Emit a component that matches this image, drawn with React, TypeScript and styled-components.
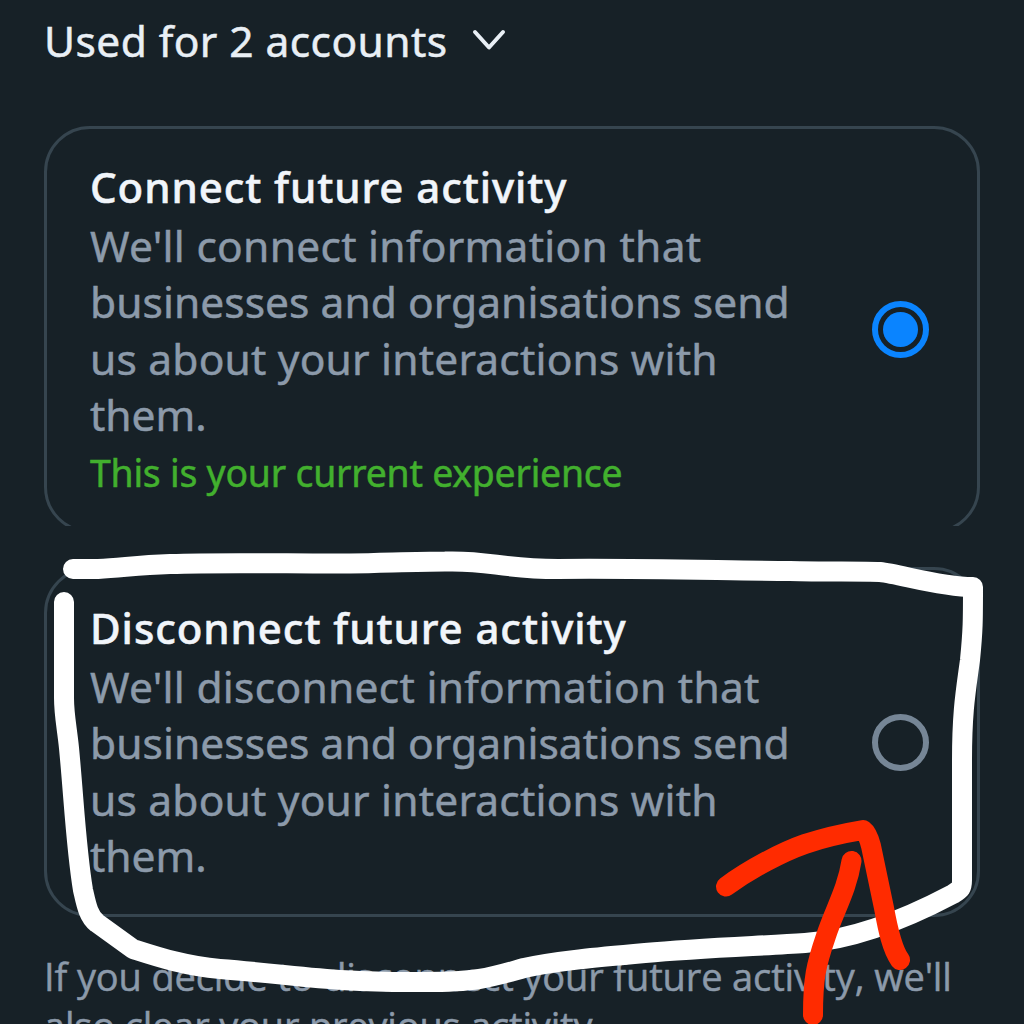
import React from "react";
import styled, { createGlobalStyle } from "styled-components";

const GlobalStyle = createGlobalStyle`
  * { box-sizing: border-box; }
  html, body { margin: 0; background: #172127; }
  body { overflow: hidden; }
`;

const Screen = styled.main`
  position: relative;
  width: 1024px;
  height: 1024px;
  overflow: hidden;
  padding: 11px 44px 0;
  background: #172127;
  color: #e9eff5;
  font-family: "Noto Sans", "Open Sans", sans-serif;
`;

const AccountsToggle = styled.div`
  display: flex;
  align-items: center;
  height: 60px;
  gap: 25px;
`;

const Line = styled.span<{ $track?: number }>`
  display: block;
  white-space: nowrap;
  letter-spacing: ${(p) => p.$track ?? 0}px;
  -webkit-text-stroke: 0.5px currentColor;
`;

const AccountsLabel = styled(Line)`
  font-size: 42.5px;
  line-height: 60px;
`;

const Chevron = styled.svg`
  width: 34px;
  height: 22px;
  margin-top: -2px;
`;

const CardClip = styled.div<{ $height: number }>`
  height: ${(p) => p.$height}px;
  overflow: hidden;
`;

const Options = styled.div`
  display: flex;
  flex-direction: column;
  gap: 41px;
  margin-top: 55px;
`;

const Card = styled.section<{ $height: number }>`
  display: flex;
  align-items: center;
  justify-content: space-between;
  height: ${(p) => p.$height}px;
  padding: 0 48px 0 43px;
  border: 3px solid #36454f;
  border-radius: 46px;
`;

const CardText = styled.div`
  align-self: flex-start;
  padding-top: 26px;
`;

const Title = styled(Line)`
  font-size: 42px;
  font-weight: 500;
  line-height: 63px;
  color: #f1f5fa;
`;

const Description = styled(Line)`
  font-size: 42.5px;
  line-height: 56.3px;
  color: #8c9aaa;
`;

const Status = styled(Line)`
  font-size: 37.4px;
  line-height: 56px;
  margin-top: 2px;
  color: #42b02e;
`;

const Radio = styled.span<{ $checked?: boolean }>`
  display: grid;
  place-items: center;
  width: 57px;
  height: 57px;
  border: 6px solid ${(p) => (p.$checked ? "#0a84ff" : "#768696")};
  border-radius: 50%;

  &::after {
    content: "";
    width: 35px;
    height: 35px;
    border-radius: 50%;
    background: ${(p) => (p.$checked ? "#0a84ff" : "transparent")};
  }
`;

const Note = styled.div`
  margin-top: 35px;
`;

const NoteLine = styled(Line)`
  font-family: "Open Sans", "Noto Sans", sans-serif;
  font-size: 38px;
  line-height: 49px;
  color: #8c9aaa;
`;

const Markup = styled.svg`
  position: absolute;
  inset: 0;
  width: 1024px;
  height: 1024px;
  fill: none;
  stroke-linecap: round;
  stroke-linejoin: round;
`;

export default function App() {
  return (
    <Screen>
      <GlobalStyle />
      <AccountsToggle>
        <AccountsLabel $track={0.42}>Used for 2 accounts</AccountsLabel>
        <Chevron viewBox="0 0 34 22" fill="none">
          <path d="M3 3 17 18.5 31 3" stroke="#e9eff5" strokeWidth="4" strokeLinecap="round" strokeLinejoin="round" />
        </Chevron>
      </AccountsToggle>
      <Options>
        <CardClip $height={400}>
          <Card $height={407}>
            <CardText>
              <Title $track={0.92}>Connect future activity</Title>
              <Description $track={0.28}>We'll connect information that</Description>
              <Description $track={0.05}>businesses and organisations send</Description>
              <Description $track={0.2}>us about your interactions with</Description>
              <Description>them.</Description>
              <Status $track={-0.23}>This is your current experience</Status>
            </CardText>
            <Radio $checked />
          </Card>
        </CardClip>
        <Card $height={350}>
          <CardText>
            <Title $track={0.92}>Disconnect future activity</Title>
            <Description $track={0.28}>We'll disconnect information that</Description>
            <Description $track={0.05}>businesses and organisations send</Description>
            <Description $track={0.2}>us about your interactions with</Description>
            <Description>them.</Description>
          </CardText>
          <Radio />
        </Card>
      </Options>
      <Note>
        <NoteLine $track={-0.13}>If you decide to disconnect your future activity, we'll</NoteLine>
        <NoteLine $track={-0.18}>also clear your previous activity.</NoteLine>
      </Note>
      <Markup viewBox="0 0 1024 1024">
        <g stroke="#fff" strokeWidth="20">
          <path d="M73 569H98C122 568 136 565 170 564C230 562 300 564 350 563.5C385 563 415 561.5 445 561.5C490 560 500 569 558 569C640 568 740 571 790 571C825 572 862 571 880 572C900 574 940 587 973 587C973 620 973 630 970 660C966 690 962 710 962 760V880C962 888 961 889 953 894C900 922 850 940 805 943C760 946 700 948 645 953C600 957 555 961 524 968C492 977 480 982 425 982C330 983 300 975 220 969C185 966 158 957 133 949L97 923C88 916 86 903 83 890C76 848 74 800 69 748C67 728 64 715 64 698V602" />
        </g>
        <g stroke="#ff2b00" strokeWidth="20">
          <path d="M726 886.5C750 869 782 852 805 844C826 837 845 833 863 830C867 833 869 838 871 846L884 908C888 930 892 949 900 960" />
          <path d="M851.5 861C847 890 834 911 826 936C816 965 813 978 813 1015" />
        </g>
      </Markup>
    </Screen>
  );
}
